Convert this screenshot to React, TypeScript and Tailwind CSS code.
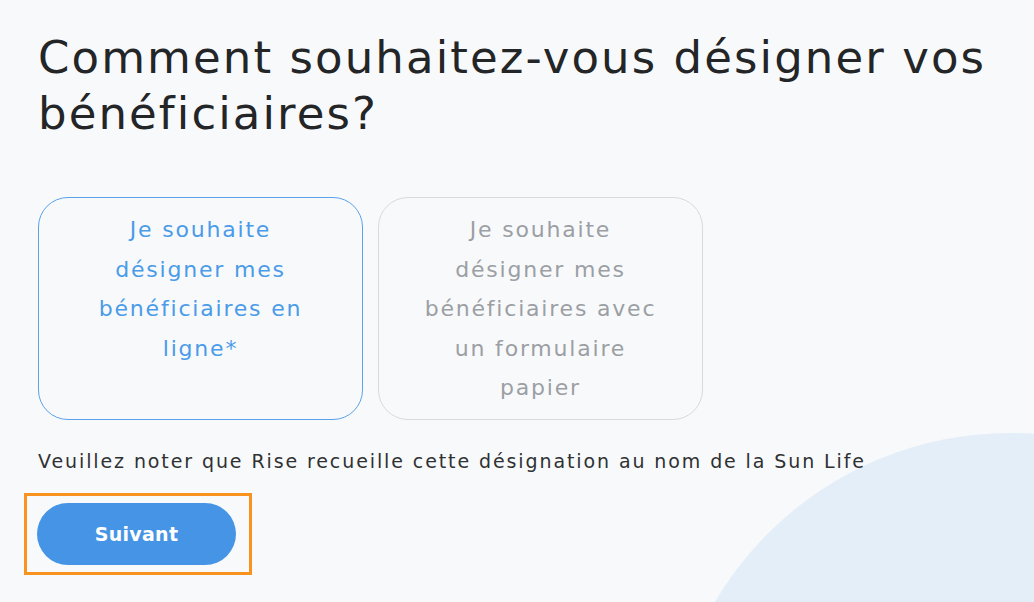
import React from "react";

export default function App() {
  return (
    <div
      className="relative w-[1034px] h-[602px] overflow-hidden bg-[#f8f9fb]"
      style={{ fontFamily: '"DejaVu Sans", "Noto Sans", sans-serif' }}
    >
      <div className="absolute left-[668px] top-[433px] w-[684px] h-[684px] rounded-full bg-[#e4eef8]" />
      <div className="relative pl-[38px] pt-[30px]">
        <h1 className="text-[45px] leading-[56px] tracking-[2.1px] text-[#232527] font-normal whitespace-nowrap">
          Comment souhaitez-vous désigner vos
          <br />
          bénéficiaires?
        </h1>
        <div className="flex gap-[15px] mt-[55px]">
          <div className="w-[325px] h-[223px] rounded-[30px] border border-[#5aa2ea] pt-[12px] text-center text-[22px] leading-[39.5px] tracking-[1.8px] text-[#4a9be8] whitespace-nowrap">
            Je souhaite
            <br />
            désigner mes
            <br />
            bénéficiaires en
            <br />
            ligne*
          </div>
          <div className="w-[325px] h-[223px] rounded-[30px] border border-[#d8dadd] pt-[12px] text-center text-[22px] leading-[39.5px] tracking-[1.8px] text-[#9b9fa4] whitespace-nowrap">
            Je souhaite
            <br />
            désigner mes
            <br />
            bénéficiaires avec
            <br />
            un formulaire
            <br />
            papier
          </div>
        </div>
        <p className="mt-[28px] text-[19px] leading-[26px] tracking-[1.9px] text-[#2f3133] whitespace-nowrap">
          Veuillez noter que Rise recueille cette désignation au nom de la Sun Life
        </p>
        <div className="-ml-[14px] mt-[19px] w-[228px] h-[82px] border-[3px] border-[#f7931e] pl-[10px] pt-[7px]">
          <button className="w-[199px] h-[62px] rounded-full bg-[#4594e6] text-white text-[19px] tracking-[0.3px] font-bold">
            Suivant
          </button>
        </div>
      </div>
    </div>
  );
}
